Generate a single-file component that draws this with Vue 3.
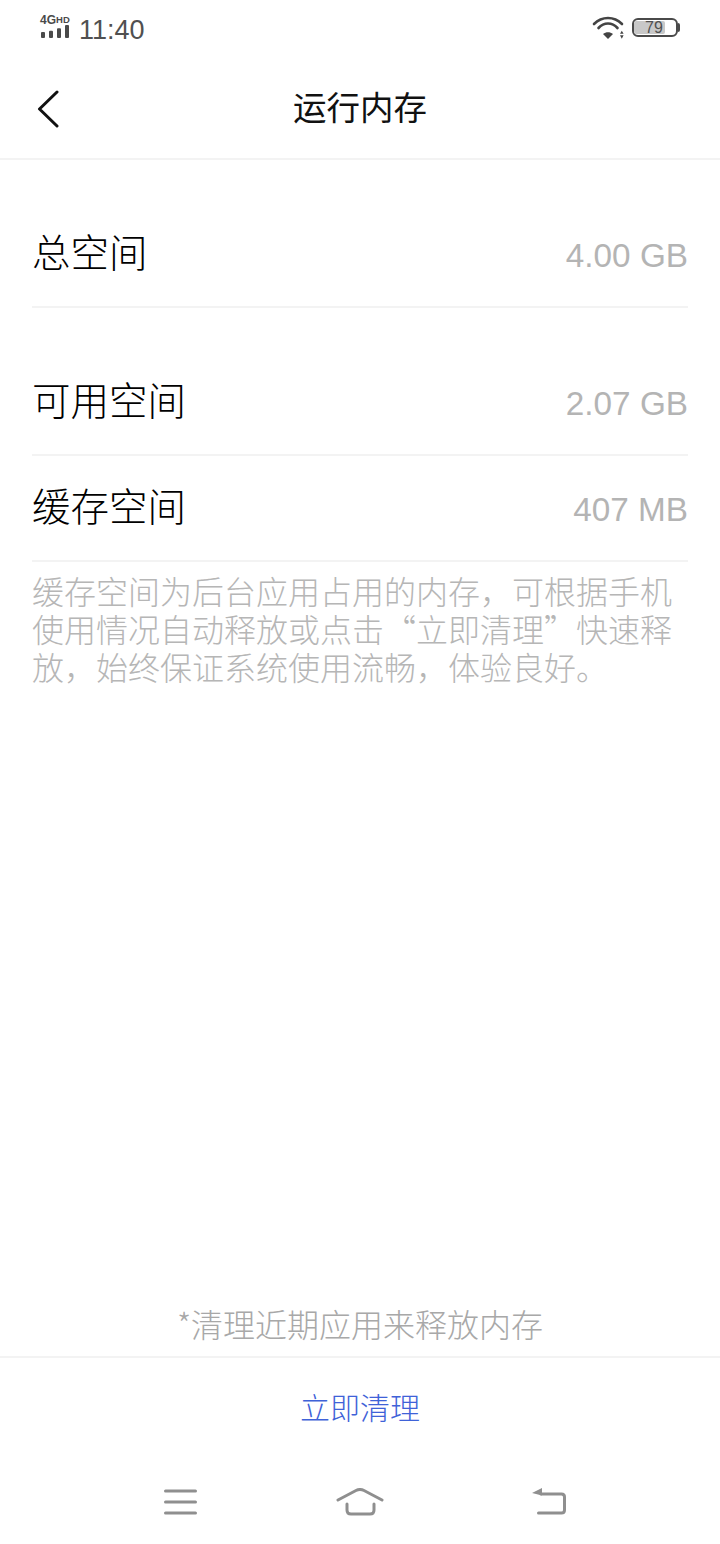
<script setup>
const rows = [
  { label: '总空间', value: '4.00 GB', cls: 'r-total' },
  { label: '可用空间', value: '2.07 GB', cls: 'r-free' },
  { label: '缓存空间', value: '407 MB', cls: 'r-cache' }
]
</script>

<template>
  <div class="page">
    <div class="status">
      <div class="status-left">
        <div class="signal">
          <div class="net"><span class="g4">4G</span><span class="hd">HD</span></div>
          <svg width="30" height="13" viewBox="0 0 30 13" class="bars">
            <rect x="1" y="7" width="4" height="6" rx="1" />
            <rect x="9" y="5.700" width="4" height="7.300" rx="1" />
            <rect x="17" y="3.300" width="4" height="9.700" rx="1" />
            <rect x="25" y="0" width="4" height="13" rx="1" />
          </svg>
        </div>
        <span class="time">11:40</span>
      </div>
      <div class="status-right">
        <svg width="32" height="26" viewBox="0 0 32 26" class="wifi">
          <path d="M2 8C10 0 22 0 30 8" />
          <path d="M6.500 12C12 6 20 6 25.500 12" />
          <path class="fill" d="M11 18C14 15.500 18 15.500 21 18L16 23Z" />
          <path class="fill" d="M28 17.700L29.800 14.700L31.600 17.700ZM28 19.200L31.600 19.200L29.800 22.700Z" />
        </svg>
        <div class="battery">
          <div class="cell"><div class="level"></div><span class="pct">79</span></div>
          <div class="tip"></div>
        </div>
      </div>
    </div>

    <header class="title-bar">
      <svg class="back" width="24" height="38" viewBox="0 0 24 38">
        <path d="M21 2L3.500 19L21 36" />
      </svg>
      <h1>运行内存</h1>
    </header>

    <main class="content">
      <div v-for="r in rows" :key="r.label" class="row" :class="r.cls">
        <span class="label">{{ r.label }}</span>
        <span class="value">{{ r.value }}</span>
      </div>
      <p class="note">缓存空间为后台应用占用的内存，可根据手机使用情况自动释放或点击“立即清理”快速释放，始终保证系统使用流畅，体验良好。</p>
    </main>

    <div class="bottom">
      <p class="hint">*清理近期应用来释放内存</p>
      <div class="action">立即清理</div>
      <nav class="nav">
        <svg width="36" height="30" viewBox="0 0 36 30">
          <path d="M3.500 3H33.500M3.500 14H33.500M3.500 25H33.500" />
        </svg>
        <svg class="home" width="50" height="30" viewBox="0 0 50 30">
          <path d="M3 12L21 2.500Q25 0.500 29 2.500L47 12" />
          <path d="M12 16V22Q12 26 16 26H35Q39 26 39 22V16" />
        </svg>
        <svg width="36" height="30" viewBox="0 0 36 30">
          <path class="fill" d="M1 5L11 0V7.500Z" />
          <path d="M10 6H30.500Q33.500 6 33.500 9V22Q33.500 25 30.500 25H7.500" />
        </svg>
      </nav>
    </div>
  </div>
</template>

<style>
html, body { margin: 0; background: #fff; }
</style>

<style scoped>
.page {
  width: 720px;
  height: 1544px;
  display: flex;
  flex-direction: column;
  background: #fff;
  font-family: "Noto Sans CJK SC", "Noto Sans", sans-serif;
  overflow: hidden;
}
.status {
  height: 58px;
  padding: 0 40px;
  display: flex;
  justify-content: space-between;
  align-items: center;
  box-sizing: border-box;
}
.status-left { display: flex; align-items: center; gap: 9px; }
.signal { width: 31px; display: flex; flex-direction: column; margin-top: -5px; }
.net {
  display: flex;
  align-items: flex-start;
  height: 10px;
  font-family: "Liberation Sans", sans-serif;
  font-weight: 700;
  color: #4a4a4a;
  line-height: 11px;
}
.g4 { font-size: 12px; letter-spacing: 0; }
.hd { font-size: 9.500px; line-height: 9px; }
.bars rect { fill: #4a4a4a; }
.bars { display: block; }
.time {
  font-family: "Liberation Sans", sans-serif;
  font-size: 27px;
  color: #505050;
  line-height: 32px;
  margin: 2px 0 0 -1px;
}
.status-right { display: flex; align-items: center; gap: 8px; }
.wifi { fill: none; stroke: #444; stroke-width: 2.600; stroke-linecap: round; }
.wifi .fill { fill: #444; stroke: none; }
.battery { display: flex; align-items: center; margin-bottom: 3px; }
.cell {
  position: relative;
  width: 42px;
  height: 13px;
  border: 2px solid #4a4a4a;
  border-radius: 6px;
  display: flex;
  align-items: center;
  overflow: hidden;
  padding: 1px 0;
  box-sizing: content-box;
}
.level { width: 31px; height: 13px; background: #c8c8c8; border-radius: 2px; }
.pct {
  position: absolute;
  left: 5px;
  width: 30px;
  text-align: center;
  font-family: "Liberation Sans", sans-serif;
  font-size: 16px;
  line-height: 15px;
  color: #505050;
}
.tip { width: 2px; height: 9px; background: #4a4a4a; border-radius: 0 2px 2px 0; }

.title-bar {
  position: relative;
  height: 102px;
  display: flex;
  align-items: center;
  justify-content: center;
  border-bottom: 2px solid #f3f3f3;
  box-sizing: border-box;
}
.title-bar h1 {
  margin: -4px 0 0;
  font-size: 33.500px;
  font-weight: 400;
  color: #111;
  line-height: 48px;
}
.back {
  position: absolute;
  left: 36px;
  top: 32px;
  fill: none;
  stroke: #111;
  stroke-width: 3;
  stroke-linecap: round;
  stroke-linejoin: round;
}

.content { flex: 1; padding: 0 32px; }
.row {
  display: flex;
  justify-content: space-between;
  align-items: center;
  box-sizing: border-box;
  border-bottom: 2px solid #f3f3f3;
  height: 106px;
}
.r-total { margin-top: 42px; }
.r-free { margin-top: 42px; }
.label { font-size: 38.500px; font-weight: 300; color: #000; line-height: 48px; margin-top: -8px; }
.value {
  font-family: "Liberation Sans", sans-serif;
  font-size: 33.300px;
  color: #b4b4b4;
  line-height: 44px;
  padding-top: 3px;
}
.note {
  margin: 9px 0 0;
  font-size: 32px;
  font-weight: 300;
  line-height: 38px;
  color: #b6b6b6;
}
.bottom { display: flex; flex-direction: column; }
.hint {
  margin: 0;
  height: 66px;
  line-height: 66px;
  text-align: center;
  font-size: 32px;
  font-weight: 300;
  color: #a8a8a8;
  border-bottom: 2px solid #f3f3f3;
}
.action {
  height: 100px;
  line-height: 96px;
  text-align: center;
  font-size: 30px;
  font-weight: 300;
  color: #3f62d8;
}
.nav {
  height: 86px;
  padding-left: 162px;
  box-sizing: border-box;
  display: flex;
  align-items: flex-start;
}
.nav svg { fill: none; stroke: #8f8f8f; stroke-width: 3; stroke-linecap: round; margin-top: 30px; }
.nav .home { margin-left: 137px; margin-right: 146px; }
.nav .fill { fill: #8f8f8f; stroke: none; }
</style>
